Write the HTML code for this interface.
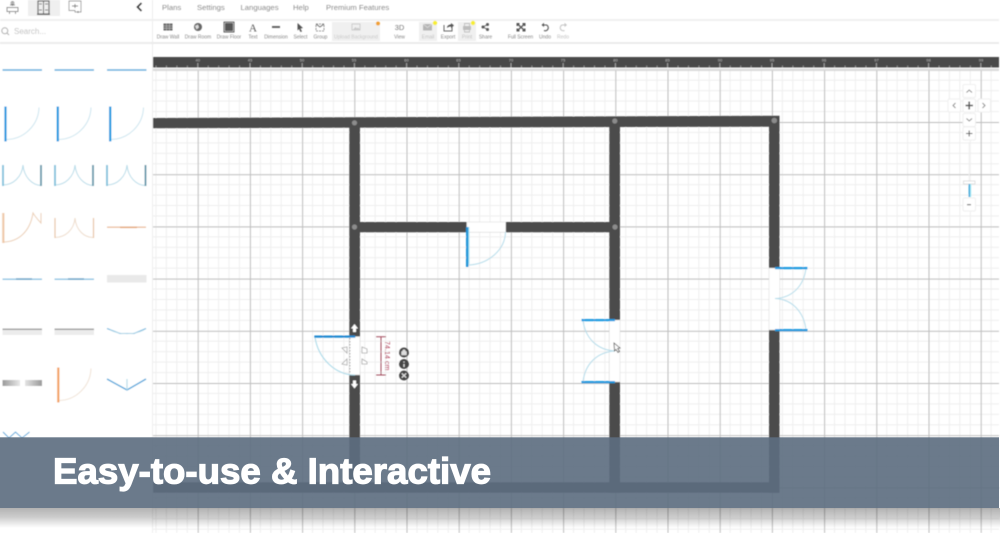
<!DOCTYPE html>
<html lang="en"><head><meta charset="utf-8"><title>Easy-to-use &amp; Interactive</title>
<style>
html,body{margin:0;padding:0;background:#fff;width:1000px;height:533px;overflow:hidden}
svg{display:block}
text{font-family:"Liberation Sans",sans-serif}
.m{font-size:7.7px;fill:#8c8c8c}
.l{font-size:5px;fill:#858585;text-anchor:middle}
.soft{filter:url(#b)}
.softer{filter:url(#b2)}
</style></head><body>
<svg width="1000" height="533" viewBox="0 0 1000 533" xmlns="http://www.w3.org/2000/svg">
<defs>
<filter id="b" x="-5%" y="-5%" width="110%" height="110%"><feGaussianBlur stdDeviation="0.5"/></filter>
<filter id="b2" x="-5%" y="-20%" width="110%" height="140%"><feGaussianBlur stdDeviation="0.3"/></filter>
<pattern id="grid" patternUnits="userSpaceOnUse" x="145.5" y="69.8" width="52.2" height="52.2">
<g stroke="#eeeeee" stroke-width="0.9" fill="none">
<path d="M10.44 0V52.2M20.88 0V52.2M31.32 0V52.2M41.76 0V52.2M0 10.44H52.2M0 20.88H52.2M0 31.32H52.2M0 41.76H52.2"/>
</g>
<path d="M0.4 0V52.2M0 0.4H52.2" stroke="#bdbdbd" stroke-width="1.200" fill="none"/>
</pattern>
<pattern id="ticks" patternUnits="userSpaceOnUse" x="145.1" y="57" width="52.2" height="11">
<path d="M.5 6V11" stroke="#bbb" stroke-width=".8"/>
<path d="M10.94 8.500V11M21.38 8.500V11M31.82 8.500V11M42.26 8.500V11" stroke="#aaa" stroke-width=".7"/>
</pattern>
<linearGradient id="sh" x1="0" y1="0" x2="0" y2="1">
<stop offset="0" stop-color="#000" stop-opacity=".3"/>
<stop offset=".45" stop-color="#000" stop-opacity=".2"/>
<stop offset="1" stop-color="#000" stop-opacity="0"/>
</linearGradient>
<linearGradient id="gr1" x1="0" x2="1"><stop offset="0" stop-color="#999"/><stop offset="1" stop-color="#e8e8e8"/></linearGradient>
<linearGradient id="gr2" x1="0" x2="1"><stop offset="0" stop-color="#e4e4e4"/><stop offset="1" stop-color="#999"/></linearGradient>
</defs>

<g class="soft">
<!-- Canvas -->
<rect x="153" y="69" width="846" height="464" fill="url(#grid)"/>
<rect x="153" y="68.500" width="846" height="2" fill="#dcdcdc"/>
<rect x="153" y="57" width="846" height="10.500" fill="#4a4a4a"/>
<rect x="153" y="57" width="846" height="10.500" fill="url(#ticks)"/>
<g font-size="4" fill="#bbb" text-anchor="middle">
<text x="197.700" y="61.500">40</text><text x="250" y="61.500">45</text><text x="302" y="61.500">50</text><text x="354" y="61.500">55</text><text x="406.500" y="61.500">60</text><text x="458.500" y="61.500">65</text><text x="511" y="61.500">70</text><text x="563" y="61.500">75</text><text x="615.500" y="61.500">80</text><text x="667.500" y="61.500">85</text><text x="720" y="61.500">90</text><text x="772" y="61.500">95</text><text x="824" y="61.500">96</text><text x="876.500" y="61.500">97</text><text x="928.500" y="61.500">98</text><text x="981" y="61.500">99</text>
</g>

<!-- Walls -->
<g fill="#4c4c4c">
<polygon points="153,118 779.500,115.700 779.500,126.700 153,128.200"/>
<rect x="349.300" y="124" width="10.700" height="368.700"/>
<rect x="609.300" y="122" width="10.700" height="370.700"/>
<rect x="769" y="120" width="10.500" height="372.700"/>
<rect x="360" y="222" width="250" height="10.300"/>
<rect x="153" y="482.300" width="626.500" height="10.400"/>
</g>
<g fill="#8c8c8c">
<circle cx="354.500" cy="122.800" r="2.600"/><circle cx="614.800" cy="121" r="2.600"/><circle cx="774.300" cy="120.500" r="2.800"/>
<circle cx="354.500" cy="227" r="2.600"/><circle cx="615" cy="227" r="2.600"/>
</g>

<!-- Door openings -->
<rect x="466.700" y="222" width="39" height="10.300" fill="#fff" stroke="#ccc" stroke-width=".4"/>
<rect x="609.300" y="320" width="10.700" height="62" fill="#fff" stroke="#ccc" stroke-width=".4"/>
<rect x="769" y="268" width="10.700" height="62" fill="#fff" stroke="#ccc" stroke-width=".4"/>
<rect x="349.300" y="336.500" width="10.700" height="38.500" fill="#fff" stroke="#bbb" stroke-width=".4"/>

<!-- Door: top inner -->
<path d="M467 265C488 265 505 250 505.500 232" fill="none" stroke="#b5dcea" stroke-width="1"/>
<rect x="466" y="227" width="2.400" height="40" fill="#1c94d8"/>
<rect x="468.400" y="227" width="1" height="37" fill="#9fe3f5"/>

<!-- Door: middle wall double -->
<path d="M583 320C585 338 597 350 615 351M583 382C585 364 597 352 615 351" fill="none" stroke="#b5dcea" stroke-width="1"/>
<rect x="581.500" y="319" width="33.500" height="2.200" fill="#1c9ae0"/>
<rect x="581.500" y="381" width="33.500" height="2.200" fill="#1c9ae0"/>
<path d="M614 343L614.500 351L616 349.500L618 352.500L619.500 351.500L617.700 348.500L620 348Z" fill="#fff" stroke="#444" stroke-width=".8"/>

<!-- Door: right wall double -->
<path d="M806 268C804 286 792 298 775 298.500M806 330C804 312 792 299 775 298.500" fill="none" stroke="#b5dcea" stroke-width="1"/>
<rect x="775" y="267" width="32.500" height="2.200" fill="#1c9ae0"/>
<rect x="775" y="329" width="32.500" height="2.200" fill="#1c9ae0"/>

<!-- Selected door -->
<path d="M315 337C318 358 335 375 355 375" fill="none" stroke="#a9d9e8" stroke-width="1"/>
<rect x="314.300" y="335.500" width="41" height="2.200" fill="#1c88d0"/>
<path d="M350 338V374" stroke="#999" stroke-width=".8" stroke-dasharray="1.500 1.500"/>
<g fill="#fff" stroke="#aaa" stroke-width=".8">
<path d="M342 348L347 347V353Z"/><path d="M347 359V365L342 364Z"/><path d="M362 347L367 349V353L362 353Z"/><path d="M362 359L367 362V364L362 364Z"/>
</g>
<path d="M354.500 324L358 328.500H356V332H353V328.500H351Z" fill="#fff"/>
<path d="M354.500 388.500L358 384H356V380.500H353V384H351Z" fill="#fff"/>
<path d="M381 337V375M376 336.800H386M376 375H386" stroke="#a24a5c" stroke-width="1" fill="none"/>
<text transform="translate(385 341) rotate(90)" font-size="7" fill="#b0405a" letter-spacing=".1">74.14 cm</text>
<g fill="#444"><circle cx="404" cy="352.500" r="5"/><circle cx="404" cy="364" r="5"/><circle cx="404" cy="375.500" r="5"/></g>
<path d="M401.500 355V351.500H406.500V355ZM402.500 351.500C402.500 349 405.500 349 405.500 351.500" fill="#ddd" stroke="#ddd" stroke-width=".5"/>
<path d="M404 361.500V362.500M404 364V367" stroke="#ddd" stroke-width="1.400"/>
<path d="M401.800 373.300L406.200 377.700M406.200 373.300L401.800 377.700" stroke="#ddd" stroke-width="1.300"/>

<!-- Pan / zoom controls -->
<g fill="#fff" stroke="#efefef" stroke-width="1">
<rect x="963" y="84.500" width="12.500" height="13" rx="1.500"/>
<rect x="948" y="99" width="12.500" height="13" rx="1.500"/>
<rect x="963" y="99" width="12.500" height="13" rx="1.500"/>
<rect x="978" y="99" width="12.500" height="13" rx="1.500"/>
<rect x="963" y="113.500" width="12.500" height="13" rx="1.500"/>
<rect x="963" y="127" width="12.500" height="13" rx="1.500"/>
<rect x="963" y="198" width="12.500" height="13" rx="1.500"/>
</g>
<g fill="none" stroke="#888" stroke-width="1">
<path d="M966.500 92.500L969.200 90L972 92.500"/>
<path d="M955.500 103L953 105.500L955.500 108"/>
<path d="M982.500 103L985 105.500L982.500 108"/>
<path d="M966.500 118.500L969.200 121L972 118.500"/>
</g>
<path d="M965.500 105.500H973M969.200 101.500V109.500" stroke="#555" stroke-width="1.600"/>
<path d="M966 133.500H972.500M969.200 130.500V136.500" stroke="#555" stroke-width="1"/>
<path d="M967 204.700H971" stroke="#555" stroke-width="1"/>
<path d="M969.200 142V181" stroke="#eee" stroke-width="1"/>
<rect x="963.500" y="181" width="11.500" height="3" fill="#fff" stroke="#ccc" stroke-width=".6"/>
<rect x="968.600" y="184" width="1.600" height="13" fill="#39a6d8"/>
<rect x="970.200" y="184" width="1" height="13" fill="#a4ecf7"/>

<!-- Sidebar -->
<rect x="0" y="0" width="152" height="533" fill="#fff"/>
<rect x="152" y="0" width="1" height="57" fill="#ececec"/>
<rect x="152" y="57" width="1" height="476" fill="#eee"/>

<!-- Top bar -->
<rect x="28" y="0" width="32" height="16" fill="#efefef"/>
<rect x="0" y="19" width="999" height="2" fill="#f0f0f0"/>
<rect x="0" y="42" width="999" height="2" fill="#ebebeb"/>
<path d="M12.500 1.500V6M7 7.500H18V11.500H7ZM9.500 11.500V14M15.500 11.500V14M10 5H15" stroke="#888" stroke-width="1" fill="none"/>
<circle cx="12.500" cy="3" r="1.500" fill="none" stroke="#888" stroke-width=".8"/>
<rect x="38" y="1" width="11" height="13" fill="none" stroke="#666" stroke-width="1.200"/>
<path d="M43.500 1V14" stroke="#666" stroke-width="1"/>
<path d="M39 4H42M45 4H48M39 10H42M45 10H48" stroke="#777" stroke-width="1"/>
<rect x="37" y="13.500" width="13" height="1.500" fill="#666"/>
<path d="M69 1H81V12H75V10.500H69Z" fill="none" stroke="#999" stroke-width=".9"/>
<path d="M72 6H78M75 4V8M78 11V13" stroke="#777" stroke-width="1" fill="none"/>
<path d="M141.500 3L137.500 7L141.500 11" fill="none" stroke="#222" stroke-width="1.800"/>

<text class="m" x="162" y="10">Plans</text>
<text class="m" x="197" y="10">Settings</text>
<text class="m" x="240.500" y="10">Languages</text>
<text class="m" x="293" y="10">Help</text>
<text class="m" x="326" y="10">Premium Features</text>

<!-- Search -->
<circle cx="4.800" cy="30.800" r="3" fill="none" stroke="#aaa" stroke-width="1"/>
<path d="M7 33L9 35" stroke="#aaa" stroke-width="1"/>
<text x="14" y="34" font-size="8" fill="#c0c0c0">Search...</text>

<!-- Toolbar boxes -->
<rect x="332" y="22" width="48" height="19" fill="#f0f0f0"/>
<rect x="419" y="22" width="18" height="19" fill="#f0f0f0"/>
<rect x="458" y="22" width="18" height="19" fill="#f0f0f0"/>
<circle cx="378" cy="23.500" r="2" fill="#f0a030"/>
<circle cx="435" cy="23" r="2.200" fill="#f7ee30"/>
<circle cx="473" cy="23" r="2.200" fill="#f7ee30"/>

<!-- Toolbar icons -->
<rect x="163.500" y="23.500" width="9" height="7" fill="#666"/>
<path d="M163.500 26H172.500M163.500 28.200H172.500M166.500 23.500V30.500M169.500 23.500V30.500" stroke="#ccc" stroke-width=".5"/>
<circle cx="198" cy="27" r="4" fill="#666"/><path d="M195 26L198 24.500L199 27.500L196.500 29.500Z" fill="#ddd"/>
<rect x="225" y="23" width="8" height="8" fill="#555"/>
<path d="M224 22H234V32H224Z" fill="none" stroke="#555" stroke-width=".9"/>
<text x="253" y="31.500" font-size="11" fill="#555" text-anchor="middle" style="font-family:'Liberation Serif',serif">A</text>
<path d="M272 27H280" stroke="#555" stroke-width="1.800"/>
<path d="M297.500 23L303 28L300.500 28.500L302 31.500L300.500 32L299 29L297.500 30.500Z" fill="#555"/>
<path d="M316 24H324V31H316Z" fill="none" stroke="#777" stroke-width=".8" stroke-dasharray="2 1"/>
<path d="M316 24L320 27L324 24" fill="none" stroke="#666" stroke-width=".8"/>
<rect x="352" y="24" width="8" height="6" fill="none" stroke="#c9c9c9" stroke-width=".9"/>
<path d="M353 29.500L355.500 27L357 28.500L358 27.500L360 29.500Z" fill="#c9c9c9"/>
<text x="399.500" y="30" font-size="7.500" fill="#777" text-anchor="middle">3D</text>
<rect x="423" y="24" width="9" height="6.500" fill="#b5b5b5"/>
<path d="M423 24L427.500 27.500L432 24" fill="none" stroke="#e0e0e0" stroke-width=".7"/>
<path d="M444 25V31H452V27" fill="none" stroke="#666" stroke-width="1"/>
<path d="M447 28C447 25.500 449 24.500 451 24.500V23L454 25.500L451 28V26.500C449.500 26.500 448 27 447 28Z" fill="#555"/>
<rect x="463" y="26" width="8" height="4" fill="#bdbdbd"/>
<path d="M464.500 26V23.500H469.500V26M464.500 30V32H469.500V30" fill="none" stroke="#bdbdbd" stroke-width=".9"/>
<g fill="#555"><circle cx="483" cy="27" r="1.500"/><circle cx="487.500" cy="24.500" r="1.500"/><circle cx="487.500" cy="29.500" r="1.500"/></g>
<path d="M483 27L487.500 24.500M483 27L487.500 29.500" stroke="#555" stroke-width=".8"/>
<path d="M517.500 24L524.500 30.500M524.500 24L517.500 30.500" stroke="#555" stroke-width="1.300"/>
<path d="M516.500 23H519.500V24.500H518V26H516.500ZM525.500 23H522.500V24.500H524V26H525.500ZM516.500 31.500H519.500V30H518V28.500H516.500ZM525.500 31.500H522.500V30H524V28.500H525.500Z" fill="#555"/>
<path d="M542.500 25H546.500A3 3 0 1 1 544 30.500" fill="none" stroke="#555" stroke-width="1.100"/>
<path d="M544 22.800L541.500 25L544 27Z" fill="#555"/>
<path d="M566 25H562A3 3 0 1 0 564.500 30.500" fill="none" stroke="#c4c4c4" stroke-width="1"/>
<path d="M564.500 22.800L567 25L564.500 27Z" fill="#c4c4c4"/>

<!-- Toolbar labels -->
<text class="l" x="168" y="38.500">Draw Wall</text>
<text class="l" x="198" y="38.500">Draw Room</text>
<text class="l" x="229" y="38.500">Draw Floor</text>
<text class="l" x="253" y="38.500">Text</text>
<text class="l" x="276" y="38.500">Dimension</text>
<text class="l" x="300.500" y="38.500">Select</text>
<text class="l" x="320.500" y="38.500">Group</text>
<text class="l" x="356" y="38.500" style="fill:#c8c8c8">Upload Background</text>
<text class="l" x="399.500" y="38.500">View</text>
<text class="l" x="428" y="38.500" style="fill:#c0c0c0">Email</text>
<text class="l" x="448" y="38.500">Export</text>
<text class="l" x="467" y="38.500" style="fill:#c0c0c0">Print</text>
<text class="l" x="485.500" y="38.500">Share</text>
<text class="l" x="520.500" y="38.500">Full Screen</text>
<text class="l" x="545" y="38.500">Undo</text>
<text class="l" x="563" y="38.500" style="fill:#c0c0c0">Redo</text>

<!-- Sidebar symbols -->
<g fill="#4aa5da">
<rect x="2.500" y="69.300" width="39.500" height="1.400"/><rect x="54.500" y="69.300" width="39.500" height="1.400"/><rect x="107" y="69.300" width="39.500" height="1.400"/>
</g>
<g fill="none">
<path d="M6 139.500C24 139.500 38.500 125 39 107.500" stroke="#cbe5ef" stroke-width="1"/>
<path d="M58 139.500C76 139.500 90.500 125 91 107.500" stroke="#cbe5ef" stroke-width="1"/>
<path d="M110.500 139.500C128.500 139.500 143 125 143.500 107.500" stroke="#cbe5ef" stroke-width="1"/>
<path d="M5.500 106.500V141.500M57.800 106.500V141.500M110.200 106.500V141.500" stroke="#1698e0" stroke-width="2.200"/>
</g>
<g fill="none" stroke="#b7dce9" stroke-width="1">
<path d="M3 185C13 185 22 177 23 165C24 177 32 185 41 185.500"/>
<path d="M55 185C65 185 74 177 75 165C76 177 84 185 93 185.500"/>
<path d="M107 185C117 185 126 177 127 165C128 177 136 185 145 185.500"/>
</g>
<g stroke-width="1.800">
<path d="M3 165V186M55 165V186M107 165V186" stroke="#7cc0da"/>
<path d="M41 165V186M93 165V186M145.500 165V186" stroke="#5f95a8"/>
</g>
<!-- Orange row -->
<path d="M3 242C18 242 30 232 33 213L35 216M35 216C38 220 40 222 41 223V213" fill="none" stroke="#eccfb5" stroke-width="1"/>
<rect x="2.200" y="213" width="2.200" height="30" fill="#eec9a8"/>
<path d="M55 237.500C65 237.500 74 230 75 218C76 230 84 237.500 93 237.500" fill="none" stroke="#eedccb" stroke-width="1"/>
<path d="M55 218V238M93.500 218V238" stroke="#e8c4a4" stroke-width="1.200"/>
<rect x="107" y="226.700" width="39" height="1" fill="#e5a878"/>
<rect x="120" y="226.500" width="17" height="1.600" fill="#e5a878"/>
<!-- Row 5 -->
<rect x="2.500" y="278.500" width="39.500" height="1.400" fill="#88c3e2"/>
<rect x="16" y="278.300" width="16" height="1.400" fill="#5a9fc5"/>
<rect x="54.500" y="278.500" width="39.500" height="1.400" fill="#88c3e2"/>
<rect x="68" y="278.300" width="16" height="1.400" fill="#5a9fc5"/>
<rect x="107" y="275" width="39.500" height="7.500" fill="#e9e9e9"/>
<!-- Row 6 -->
<rect x="2.500" y="329.500" width="39.500" height="5.500" fill="#ececec"/>
<rect x="2.500" y="328.500" width="39.500" height="1.500" fill="#a0a0a0"/>
<rect x="54.500" y="329.500" width="39.500" height="5.500" fill="#ececec"/>
<rect x="54.500" y="328.500" width="39.500" height="1.500" fill="#a0a0a0"/>
<path d="M107 328.500L120 333.500H134L146 328.500" fill="none" stroke="#5fb0dc" stroke-width="1"/>
<path d="M110 330C120 335 134 335 144 330" fill="none" stroke="#b8dbe9" stroke-width=".8"/>
<!-- Row 7 -->
<rect x="2.500" y="380" width="17.500" height="6" fill="url(#gr1)"/>
<rect x="25" y="380" width="17" height="6" fill="url(#gr2)"/>
<path d="M58.500 400.500C76 400.500 90.500 386 91 368.500" fill="none" stroke="#f0e2d4" stroke-width="1"/>
<rect x="57.200" y="367.500" width="2.200" height="35" fill="#f3a364"/>
<path d="M107 379L127 390L146 379" fill="none" stroke="#4aa5da" stroke-width="1.300"/>
<path d="M127 379V390" stroke="#b5dcea" stroke-width="1.200"/>
<path d="M3 432L9 438L15.500 432L22 438L29.500 432" fill="none" stroke="#4aa5da" stroke-width="1"/>
</g>

<!-- Banner -->
<rect x="0" y="508" width="1000" height="20" fill="url(#sh)"/>
<rect x="0" y="437.300" width="999" height="70.700" fill="rgb(92,109,127)" fill-opacity=".91"/>
<text x="53" y="483.300" font-size="36.500" font-weight="700" fill="#fff" stroke="#fff" stroke-width="1.200" textLength="438" lengthAdjust="spacingAndGlyphs" class="softer">Easy-to-use &amp; Interactive</text>
</svg>
</body></html>
